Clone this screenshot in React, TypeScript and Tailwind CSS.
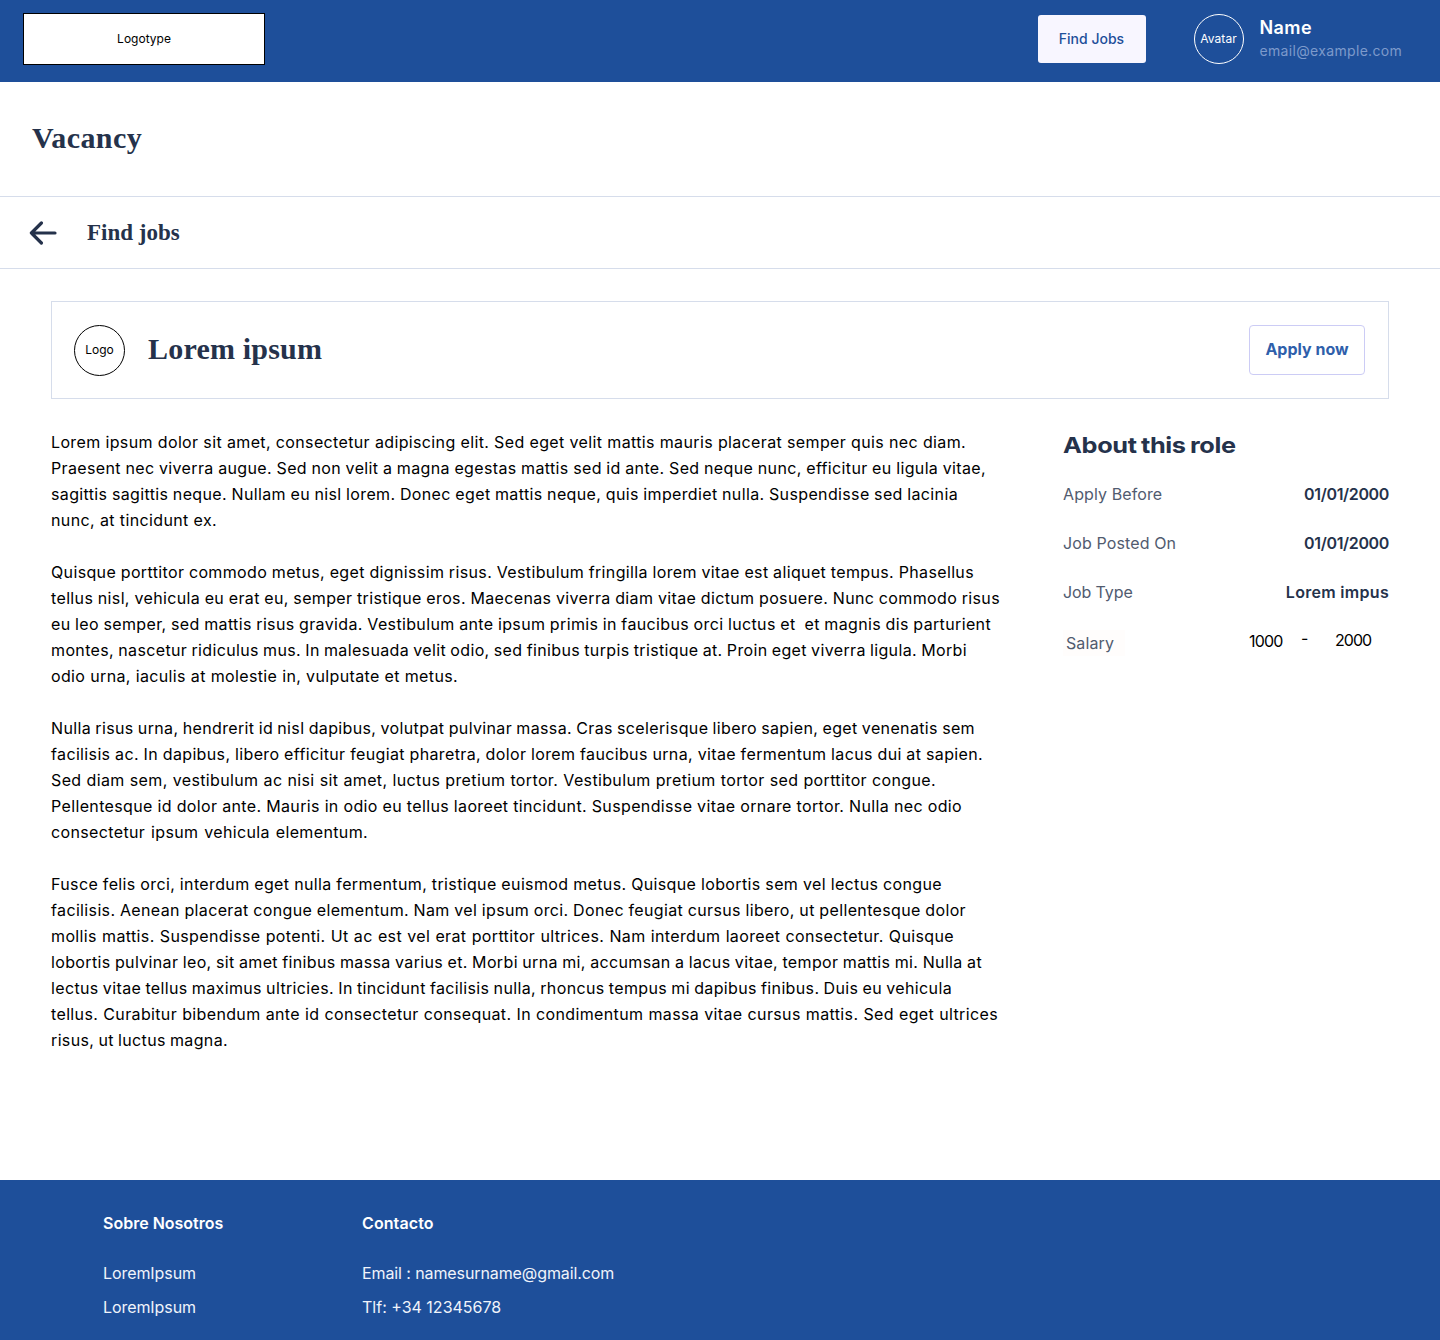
const paragraphs: [string, number][][] = [
  [
    ["Lorem ipsum dolor sit amet, consectetur adipiscing elit. Sed eget velit mattis mauris placerat semper quis nec diam.", 915],
    ["Praesent nec viverra augue. Sed non velit a magna egestas mattis sed id ante. Sed neque nunc, efficitur eu ligula vitae,", 935],
    ["sagittis sagittis neque. Nullam eu nisl lorem. Donec eget mattis neque, quis imperdiet nulla. Suspendisse sed lacinia", 907],
    ["nunc, at tincidunt ex.", 166],
  ],
  [
    ["Quisque porttitor commodo metus, eget dignissim risus. Vestibulum fringilla lorem vitae est aliquet tempus. Phasellus", 923],
    ["tellus nisl, vehicula eu erat eu, semper tristique eros. Maecenas viverra diam vitae dictum posuere. Nunc commodo risus", 949],
    ["eu leo semper, sed mattis risus gravida. Vestibulum ante ipsum primis in faucibus orci luctus et \u00a0et magnis dis parturient", 940],
    ["montes, nascetur ridiculus mus. In malesuada velit odio, sed finibus turpis tristique at. Proin eget viverra ligula. Morbi", 916],
    ["odio urna, iaculis at molestie in, vulputate et metus.", 407],
  ],
  [
    ["Nulla risus urna, hendrerit id nisl dapibus, volutpat pulvinar massa. Cras scelerisque libero sapien, eget venenatis sem", 924],
    ["facilisis ac. In dapibus, libero efficitur feugiat pharetra, dolor lorem faucibus urna, vitae fermentum lacus dui at sapien.", 932],
    ["Sed diam sem, vestibulum ac nisi sit amet, luctus pretium tortor. Vestibulum pretium tortor sed porttitor congue.", 885],
    ["Pellentesque id dolor ante. Mauris in odio eu tellus laoreet tincidunt. Suspendisse vitae ornare tortor. Nulla nec odio", 911],
    ["consectetur ipsum vehicula elementum.", 317],
  ],
  [
    ["Fusce felis orci, interdum eget nulla fermentum, tristique euismod metus. Quisque lobortis sem vel lectus congue", 891],
    ["facilisis. Aenean placerat congue elementum. Nam vel ipsum orci. Donec feugiat cursus libero, ut pellentesque dolor", 915],
    ["mollis mattis. Suspendisse potenti. Ut ac est vel erat porttitor ultrices. Nam interdum laoreet consectetur. Quisque", 903],
    ["lobortis pulvinar leo, sit amet finibus massa varius et. Morbi urna mi, accumsan a lacus vitae, tempor mattis mi. Nulla at", 931],
    ["lectus vitae tellus maximus ultricies. In tincidunt facilisis nulla, rhoncus tempus mi dapibus finibus. Duis eu vehicula", 901],
    ["tellus. Curabitur bibendum ante id consectetur consequat. In condimentum massa vitae cursus mattis. Sed eget ultrices", 947],
    ["risus, ut luctus magna.", 177],
  ],
];

const details = [
  { label: "Apply Before", value: "01/01/2000", labelClass: "tracking-[0.1px]", valueClass: "tracking-[-0.35px]" },
  { label: "Job Posted On", value: "01/01/2000", labelClass: "tracking-[0.12px]", valueClass: "tracking-[-0.35px]" },
  { label: "Job Type", value: "Lorem impus", labelClass: "tracking-[-0.1px]", valueClass: "tracking-[0.3px]" },
];

function Header() {
  return (
    <header className="flex h-[82px] items-start bg-[#1e4f9a] pl-[23px]">
      <div className="mt-[13px] flex h-[52px] w-[242px] items-center justify-center border border-black bg-white text-xs text-black">
        Logotype
      </div>
      <div className="mt-[15px] ml-auto flex h-12 w-[108px] items-center justify-center rounded-[3px] bg-[#f8f6ff] text-sm font-medium text-[#1e4f9a]">
        Find Jobs
      </div>
      <div className="mt-3.5 ml-12 flex h-[50px] w-[50px] items-center justify-center rounded-full border border-white text-xs tracking-[0.1px] text-white">
        Avatar
      </div>
      <div className="mt-4 ml-4 w-[180.5px]">
        <div className="text-lg leading-6 font-semibold tracking-[0.4px] text-white">Name</div>
        <div className="text-sm leading-[22px] tracking-[0.33px] text-[#7d9acb]">email@example.com</div>
      </div>
    </header>
  );
}

function Sidebar() {
  return (
    <aside className="w-[326px]">
      <h2 className="mt-px w-max origin-left scale-x-[1.15] text-[22px] leading-[30px] font-bold tracking-[-0.3px] [word-spacing:-1.2px] whitespace-nowrap text-[#25324b]">
        About this role
      </h2>
      <dl className="mt-[21px] flex flex-col gap-[23px] leading-[26px]">
        {details.map((d) => (
          <div key={d.label} className="flex justify-between">
            <dt className={`text-[#515b6f] ${d.labelClass}`}>{d.label}</dt>
            <dd className={`font-semibold text-[#25324b] ${d.valueClass}`}>{d.value}</dd>
          </div>
        ))}
        <div className="flex items-start text-black">
          <dt className="mt-0.5 w-[62px] bg-[#fffdfc] pl-[3px] tracking-[0.1px] text-[#515b6f]">Salary</dt>
          <dd className="ml-[124px] flex">
            <span className="w-[52px] tracking-[-0.8px]">1000</span>
            <span className="mt-[-3px] w-[34px]">-</span>
            <span className="mt-[-1px] tracking-[-0.95px]">2000</span>
          </dd>
        </div>
      </dl>
    </aside>
  );
}

export default function App() {
  return (
    <div className="flex h-[1340px] w-[1440px] flex-col overflow-hidden bg-white font-['Inter',sans-serif] text-base">
      <Header />
      <div className="flex h-[115px] items-center border-b border-[#d6ddeb] pb-0.5 pl-8">
        <h1 className="font-['Liberation_Serif',serif] text-[30px] leading-9 font-bold tracking-[0.4px] text-[#25324b]">Vacancy</h1>
      </div>
      <div className="flex h-[72px] items-center border-b border-[#d6ddeb] pl-[29px] text-[#25324b]">
        <svg width="28" height="24" viewBox="0 0 28 24" fill="none" stroke="currentColor" strokeWidth="3.2" strokeLinecap="round" strokeLinejoin="round">
          <path d="M12.4 2 L2.4 12 L12.4 22 M2.4 12 H26" />
        </svg>
        <span className="ml-[30px] font-['Liberation_Serif',serif] text-[23px] leading-7 font-bold">Find jobs</span>
      </div>
      <main className="px-[51px] pt-8">
        <section className="flex h-[98px] items-center border border-[#d6ddeb] pr-[23px] pl-[22px]">
          <div className="flex h-[51px] w-[51px] items-center justify-center rounded-full border border-black text-xs text-black">Logo</div>
          <h2 className="ml-[23px] pb-0.5 font-['Liberation_Serif',serif] text-[30px] leading-9 font-bold tracking-[0.2px] text-[#25324b]">Lorem ipsum</h2>
          <button className="ml-auto h-[50px] w-[116px] rounded border border-[#ccccf5] pb-[3px] font-bold text-[#2f5fab]">Apply now</button>
        </section>
        <div className="mt-[30px] flex justify-between">
          <article className="flex w-[960px] flex-col gap-[26px] leading-[26px] tracking-[0.36px] [word-spacing:-2px] text-black">
            {paragraphs.map((lines, i) => (
              <p key={i}>
                {lines.map(([text, width]) => (
                  <span key={text} className="block whitespace-nowrap [text-align-last:justify]" style={{ width }}>
                    {text}
                  </span>
                ))}
              </p>
            ))}
          </article>
          <Sidebar />
        </div>
      </main>
      <footer className="mt-auto flex h-40 bg-[#1e4f9a] pt-[31px] pl-[103px] text-white">
        <div className="w-[259px]">
          <h3 className="leading-6 font-semibold">Sobre Nosotros</h3>
          <ul className="mt-[26px] flex flex-col gap-2.5 leading-6 tracking-[-0.08px] text-[#f0f4fb]">
            <li>LoremIpsum</li>
            <li>LoremIpsum</li>
          </ul>
        </div>
        <div>
          <h3 className="leading-6 font-semibold tracking-[0.1px]">Contacto</h3>
          <ul className="mt-[26px] flex flex-col gap-2.5 leading-6 text-[#f0f4fb]">
            <li className="tracking-[-0.1px]">Email : namesurname@gmail.com</li>
            <li>Tlf: +34 12345678</li>
          </ul>
        </div>
      </footer>
    </div>
  );
}
